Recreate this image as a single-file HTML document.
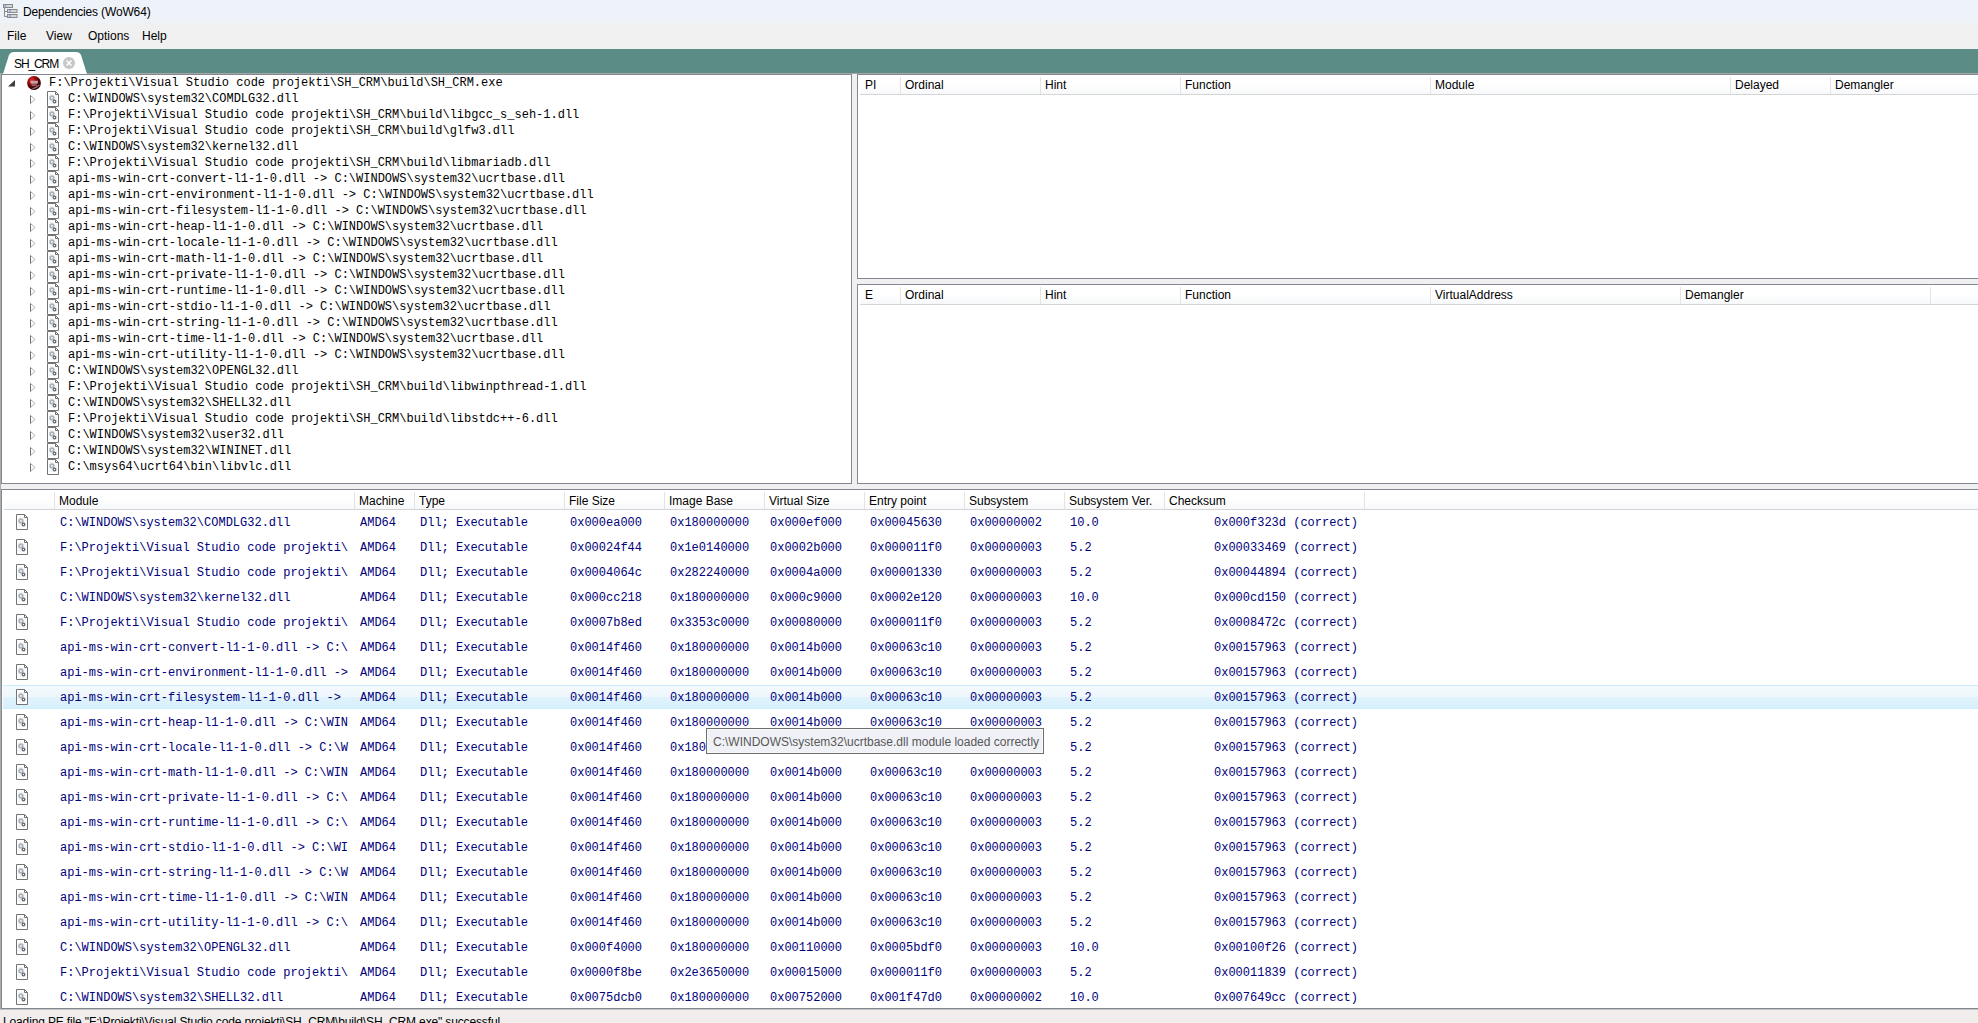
<!DOCTYPE html>
<html><head><meta charset="utf-8"><style>
*{box-sizing:border-box}
html,body{margin:0;padding:0}
body{width:1978px;height:1023px;overflow:hidden;position:relative;background:#f0f0f0;font-family:"Liberation Sans",sans-serif;font-size:12px;color:#000}
.a{position:absolute}
.t{position:absolute;white-space:pre;line-height:14px}
.mono{font-family:"Liberation Mono",monospace;font-size:12px}
#title{left:0;top:0;width:1978px;height:23px;background:#eef2f9}
#menu{left:0;top:23px;width:1978px;height:26px;background:#f0f0f0}
#teal{left:0;top:49px;width:1978px;height:24px;background:#5c8c86}
#tabline{left:0;top:73px;width:1978px;height:1px;background:#a6a6a6}
.panel{position:absolute;background:#fff;border:1px solid #828790;overflow:hidden}
.hdr{position:absolute;left:1px;top:1px;height:19px;background:linear-gradient(#fff 0%,#fff 45%,#f7f8fa 100%);border-bottom:1px solid #d5d5d5}
.sep{position:absolute;top:2px;width:1px;height:17px;background:#e3e4e6}
.fi{position:absolute}
.exp{position:absolute}
.row{position:absolute;left:0;width:1978px;height:25px}
.hl{background:linear-gradient(#f3fafe 0%,#eef7fd 50%,#e0f3fc 51%,#d7effc 100%);border-top:1px solid #cdeefd;border-bottom:1px solid #cdeefd;height:24px}
.d{color:#00007a}
</style></head><body>

<div id="title" class="a"></div>
<svg class="a" style="left:3px;top:4px" width="15" height="15" viewBox="0 0 15 15">
<path d="M1.5 2V12.5H4M1.5 7.5H4" fill="none" stroke="#8c8c8c" stroke-width="1"/>
<rect x="0.5" y="0.5" width="9" height="3" fill="#d7d7d7" stroke="#8a8a8a"/>
<rect x="4.5" y="5.5" width="9.5" height="3" fill="#d7d7d7" stroke="#8a8a8a"/>
<rect x="4.5" y="10.5" width="9.5" height="3" fill="#d7d7d7" stroke="#8a8a8a"/>
<rect x="1.5" y="1.5" width="2" height="1" fill="#3a8cff"/>
<rect x="6" y="6.5" width="2" height="1" fill="#3a8cff"/>
<rect x="6" y="11.5" width="2" height="1" fill="#3a8cff"/>
</svg>
<div class="t" style="left:23px;top:5px;font-size:12px;letter-spacing:-0.15px">Dependencies (WoW64)</div>
<div id="menu" class="a"></div>
<div class="t" style="left:7px;top:29px">File</div>
<div class="t" style="left:46px;top:29px">View</div>
<div class="t" style="left:88px;top:29px">Options</div>
<div class="t" style="left:142px;top:29px">Help</div>
<div id="teal" class="a"></div>
<div id="tabline" class="a"></div>
<div class="a" style="left:0;top:73px;width:1px;height:937px;background:#acacac"></div>
<div class="a" style="left:0;top:1009px;width:1978px;height:1px;background:#c4c4c4"></div>
<div class="a" style="left:0;top:1010px;width:1978px;height:13px;background:#f1eded"></div>
<svg class="a" style="left:0;top:50px" width="92" height="24" viewBox="0 0 92 24"><path d="M3 24 L9 5 Q10.5 2 14 2 L76 2 Q79.5 2 81 5 L87 24 Z" fill="#fff"/></svg>
<div class="t" style="left:14px;top:57px;letter-spacing:-1.1px">SH_CRM</div>
<svg class="a" style="left:63px;top:57px" width="12" height="12" viewBox="0 0 12 12"><circle cx="6" cy="6" r="6" fill="#c7c7c7"/><path d="M3.5 3.5L8.5 8.5M8.5 3.5L3.5 8.5" stroke="#fff" stroke-width="1.5"/></svg>
<div class="panel" style="left:1px;top:74px;width:851px;height:410px">
<svg class="exp" style="left:6px;top:5px" width="8" height="7" viewBox="0 0 8 7"><path d="M7 0V6.5H0Z" fill="#404040"/></svg>
<svg class="a" style="left:25px;top:1px" width="14" height="14" viewBox="0 0 14 14"><defs><radialGradient id="rg" cx="35%" cy="30%" r="75%"><stop offset="0" stop-color="#e03535"/><stop offset="0.35" stop-color="#a00c0c"/><stop offset="0.7" stop-color="#4a0404"/><stop offset="1" stop-color="#300202"/></radialGradient></defs><circle cx="7" cy="7" r="6.9" fill="url(#rg)"/><path d="M3.2 4.8H11.2L10.6 7.8H3.8Z" fill="#c9b8bb" opacity="0.85"/><path d="M4.5 8.6H10L9.6 9.8H4.8Z" fill="#b9a4a8" opacity="0.8"/><path d="M5 12.2Q9 11.6 12.3 8.6L12.6 9.6Q9.5 12.8 6 13Z" fill="#9a9098" opacity="0.9"/></svg>
<div class="t mono" style="left:47px;top:1px">F:\Projekti\Visual Studio code projekti\SH_CRM\build\SH_CRM.exe</div>
<svg class="exp" style="left:28px;top:20px" width="6" height="9" viewBox="0 0 6 9"><path d="M0.5 0.5V8.5L5 4.5Z" fill="#fff" stroke="#b0b0b0"/><path d="M0.5 0.5V8.5" stroke="#707070"/></svg>
<div style="position:absolute;left:45px;top:16px"><svg class="fi" width="12" height="16" viewBox="0 0 12 16"><path d="M0.5 0.5H8.5L11.5 3.5V15.5H0.5Z" fill="#fff" stroke="#737373"/><rect x="2.5" y="3" width="7.5" height="10" fill="#f6f6f6"/><path d="M8.5 0.5V3.5H11.5" fill="none" stroke="#737373"/><circle cx="4.9" cy="6.9" r="2.7" fill="#a9b2bb"/><circle cx="4.9" cy="6.9" r="1" fill="#f2f4f6"/><circle cx="7.5" cy="10.5" r="1.9" fill="#5f676f"/><circle cx="7.5" cy="10.5" r="0.7" fill="#fff"/></svg></div>
<div class="t mono" style="left:66px;top:17px">C:\WINDOWS\system32\COMDLG32.dll</div>
<svg class="exp" style="left:28px;top:36px" width="6" height="9" viewBox="0 0 6 9"><path d="M0.5 0.5V8.5L5 4.5Z" fill="#fff" stroke="#b0b0b0"/><path d="M0.5 0.5V8.5" stroke="#707070"/></svg>
<div style="position:absolute;left:45px;top:32px"><svg class="fi" width="12" height="16" viewBox="0 0 12 16"><path d="M0.5 0.5H8.5L11.5 3.5V15.5H0.5Z" fill="#fff" stroke="#737373"/><rect x="2.5" y="3" width="7.5" height="10" fill="#f6f6f6"/><path d="M8.5 0.5V3.5H11.5" fill="none" stroke="#737373"/><circle cx="4.9" cy="6.9" r="2.7" fill="#a9b2bb"/><circle cx="4.9" cy="6.9" r="1" fill="#f2f4f6"/><circle cx="7.5" cy="10.5" r="1.9" fill="#5f676f"/><circle cx="7.5" cy="10.5" r="0.7" fill="#fff"/></svg></div>
<div class="t mono" style="left:66px;top:33px">F:\Projekti\Visual Studio code projekti\SH_CRM\build\libgcc_s_seh-1.dll</div>
<svg class="exp" style="left:28px;top:52px" width="6" height="9" viewBox="0 0 6 9"><path d="M0.5 0.5V8.5L5 4.5Z" fill="#fff" stroke="#b0b0b0"/><path d="M0.5 0.5V8.5" stroke="#707070"/></svg>
<div style="position:absolute;left:45px;top:48px"><svg class="fi" width="12" height="16" viewBox="0 0 12 16"><path d="M0.5 0.5H8.5L11.5 3.5V15.5H0.5Z" fill="#fff" stroke="#737373"/><rect x="2.5" y="3" width="7.5" height="10" fill="#f6f6f6"/><path d="M8.5 0.5V3.5H11.5" fill="none" stroke="#737373"/><circle cx="4.9" cy="6.9" r="2.7" fill="#a9b2bb"/><circle cx="4.9" cy="6.9" r="1" fill="#f2f4f6"/><circle cx="7.5" cy="10.5" r="1.9" fill="#5f676f"/><circle cx="7.5" cy="10.5" r="0.7" fill="#fff"/></svg></div>
<div class="t mono" style="left:66px;top:49px">F:\Projekti\Visual Studio code projekti\SH_CRM\build\glfw3.dll</div>
<svg class="exp" style="left:28px;top:68px" width="6" height="9" viewBox="0 0 6 9"><path d="M0.5 0.5V8.5L5 4.5Z" fill="#fff" stroke="#b0b0b0"/><path d="M0.5 0.5V8.5" stroke="#707070"/></svg>
<div style="position:absolute;left:45px;top:64px"><svg class="fi" width="12" height="16" viewBox="0 0 12 16"><path d="M0.5 0.5H8.5L11.5 3.5V15.5H0.5Z" fill="#fff" stroke="#737373"/><rect x="2.5" y="3" width="7.5" height="10" fill="#f6f6f6"/><path d="M8.5 0.5V3.5H11.5" fill="none" stroke="#737373"/><circle cx="4.9" cy="6.9" r="2.7" fill="#a9b2bb"/><circle cx="4.9" cy="6.9" r="1" fill="#f2f4f6"/><circle cx="7.5" cy="10.5" r="1.9" fill="#5f676f"/><circle cx="7.5" cy="10.5" r="0.7" fill="#fff"/></svg></div>
<div class="t mono" style="left:66px;top:65px">C:\WINDOWS\system32\kernel32.dll</div>
<svg class="exp" style="left:28px;top:84px" width="6" height="9" viewBox="0 0 6 9"><path d="M0.5 0.5V8.5L5 4.5Z" fill="#fff" stroke="#b0b0b0"/><path d="M0.5 0.5V8.5" stroke="#707070"/></svg>
<div style="position:absolute;left:45px;top:80px"><svg class="fi" width="12" height="16" viewBox="0 0 12 16"><path d="M0.5 0.5H8.5L11.5 3.5V15.5H0.5Z" fill="#fff" stroke="#737373"/><rect x="2.5" y="3" width="7.5" height="10" fill="#f6f6f6"/><path d="M8.5 0.5V3.5H11.5" fill="none" stroke="#737373"/><circle cx="4.9" cy="6.9" r="2.7" fill="#a9b2bb"/><circle cx="4.9" cy="6.9" r="1" fill="#f2f4f6"/><circle cx="7.5" cy="10.5" r="1.9" fill="#5f676f"/><circle cx="7.5" cy="10.5" r="0.7" fill="#fff"/></svg></div>
<div class="t mono" style="left:66px;top:81px">F:\Projekti\Visual Studio code projekti\SH_CRM\build\libmariadb.dll</div>
<svg class="exp" style="left:28px;top:100px" width="6" height="9" viewBox="0 0 6 9"><path d="M0.5 0.5V8.5L5 4.5Z" fill="#fff" stroke="#b0b0b0"/><path d="M0.5 0.5V8.5" stroke="#707070"/></svg>
<div style="position:absolute;left:45px;top:96px"><svg class="fi" width="12" height="16" viewBox="0 0 12 16"><path d="M0.5 0.5H8.5L11.5 3.5V15.5H0.5Z" fill="#fff" stroke="#737373"/><rect x="2.5" y="3" width="7.5" height="10" fill="#f6f6f6"/><path d="M8.5 0.5V3.5H11.5" fill="none" stroke="#737373"/><circle cx="4.9" cy="6.9" r="2.7" fill="#a9b2bb"/><circle cx="4.9" cy="6.9" r="1" fill="#f2f4f6"/><circle cx="7.5" cy="10.5" r="1.9" fill="#5f676f"/><circle cx="7.5" cy="10.5" r="0.7" fill="#fff"/></svg></div>
<div class="t mono" style="left:66px;top:97px">api-ms-win-crt-convert-l1-1-0.dll -&gt; C:\WINDOWS\system32\ucrtbase.dll</div>
<svg class="exp" style="left:28px;top:116px" width="6" height="9" viewBox="0 0 6 9"><path d="M0.5 0.5V8.5L5 4.5Z" fill="#fff" stroke="#b0b0b0"/><path d="M0.5 0.5V8.5" stroke="#707070"/></svg>
<div style="position:absolute;left:45px;top:112px"><svg class="fi" width="12" height="16" viewBox="0 0 12 16"><path d="M0.5 0.5H8.5L11.5 3.5V15.5H0.5Z" fill="#fff" stroke="#737373"/><rect x="2.5" y="3" width="7.5" height="10" fill="#f6f6f6"/><path d="M8.5 0.5V3.5H11.5" fill="none" stroke="#737373"/><circle cx="4.9" cy="6.9" r="2.7" fill="#a9b2bb"/><circle cx="4.9" cy="6.9" r="1" fill="#f2f4f6"/><circle cx="7.5" cy="10.5" r="1.9" fill="#5f676f"/><circle cx="7.5" cy="10.5" r="0.7" fill="#fff"/></svg></div>
<div class="t mono" style="left:66px;top:113px">api-ms-win-crt-environment-l1-1-0.dll -&gt; C:\WINDOWS\system32\ucrtbase.dll</div>
<svg class="exp" style="left:28px;top:132px" width="6" height="9" viewBox="0 0 6 9"><path d="M0.5 0.5V8.5L5 4.5Z" fill="#fff" stroke="#b0b0b0"/><path d="M0.5 0.5V8.5" stroke="#707070"/></svg>
<div style="position:absolute;left:45px;top:128px"><svg class="fi" width="12" height="16" viewBox="0 0 12 16"><path d="M0.5 0.5H8.5L11.5 3.5V15.5H0.5Z" fill="#fff" stroke="#737373"/><rect x="2.5" y="3" width="7.5" height="10" fill="#f6f6f6"/><path d="M8.5 0.5V3.5H11.5" fill="none" stroke="#737373"/><circle cx="4.9" cy="6.9" r="2.7" fill="#a9b2bb"/><circle cx="4.9" cy="6.9" r="1" fill="#f2f4f6"/><circle cx="7.5" cy="10.5" r="1.9" fill="#5f676f"/><circle cx="7.5" cy="10.5" r="0.7" fill="#fff"/></svg></div>
<div class="t mono" style="left:66px;top:129px">api-ms-win-crt-filesystem-l1-1-0.dll -&gt; C:\WINDOWS\system32\ucrtbase.dll</div>
<svg class="exp" style="left:28px;top:148px" width="6" height="9" viewBox="0 0 6 9"><path d="M0.5 0.5V8.5L5 4.5Z" fill="#fff" stroke="#b0b0b0"/><path d="M0.5 0.5V8.5" stroke="#707070"/></svg>
<div style="position:absolute;left:45px;top:144px"><svg class="fi" width="12" height="16" viewBox="0 0 12 16"><path d="M0.5 0.5H8.5L11.5 3.5V15.5H0.5Z" fill="#fff" stroke="#737373"/><rect x="2.5" y="3" width="7.5" height="10" fill="#f6f6f6"/><path d="M8.5 0.5V3.5H11.5" fill="none" stroke="#737373"/><circle cx="4.9" cy="6.9" r="2.7" fill="#a9b2bb"/><circle cx="4.9" cy="6.9" r="1" fill="#f2f4f6"/><circle cx="7.5" cy="10.5" r="1.9" fill="#5f676f"/><circle cx="7.5" cy="10.5" r="0.7" fill="#fff"/></svg></div>
<div class="t mono" style="left:66px;top:145px">api-ms-win-crt-heap-l1-1-0.dll -&gt; C:\WINDOWS\system32\ucrtbase.dll</div>
<svg class="exp" style="left:28px;top:164px" width="6" height="9" viewBox="0 0 6 9"><path d="M0.5 0.5V8.5L5 4.5Z" fill="#fff" stroke="#b0b0b0"/><path d="M0.5 0.5V8.5" stroke="#707070"/></svg>
<div style="position:absolute;left:45px;top:160px"><svg class="fi" width="12" height="16" viewBox="0 0 12 16"><path d="M0.5 0.5H8.5L11.5 3.5V15.5H0.5Z" fill="#fff" stroke="#737373"/><rect x="2.5" y="3" width="7.5" height="10" fill="#f6f6f6"/><path d="M8.5 0.5V3.5H11.5" fill="none" stroke="#737373"/><circle cx="4.9" cy="6.9" r="2.7" fill="#a9b2bb"/><circle cx="4.9" cy="6.9" r="1" fill="#f2f4f6"/><circle cx="7.5" cy="10.5" r="1.9" fill="#5f676f"/><circle cx="7.5" cy="10.5" r="0.7" fill="#fff"/></svg></div>
<div class="t mono" style="left:66px;top:161px">api-ms-win-crt-locale-l1-1-0.dll -&gt; C:\WINDOWS\system32\ucrtbase.dll</div>
<svg class="exp" style="left:28px;top:180px" width="6" height="9" viewBox="0 0 6 9"><path d="M0.5 0.5V8.5L5 4.5Z" fill="#fff" stroke="#b0b0b0"/><path d="M0.5 0.5V8.5" stroke="#707070"/></svg>
<div style="position:absolute;left:45px;top:176px"><svg class="fi" width="12" height="16" viewBox="0 0 12 16"><path d="M0.5 0.5H8.5L11.5 3.5V15.5H0.5Z" fill="#fff" stroke="#737373"/><rect x="2.5" y="3" width="7.5" height="10" fill="#f6f6f6"/><path d="M8.5 0.5V3.5H11.5" fill="none" stroke="#737373"/><circle cx="4.9" cy="6.9" r="2.7" fill="#a9b2bb"/><circle cx="4.9" cy="6.9" r="1" fill="#f2f4f6"/><circle cx="7.5" cy="10.5" r="1.9" fill="#5f676f"/><circle cx="7.5" cy="10.5" r="0.7" fill="#fff"/></svg></div>
<div class="t mono" style="left:66px;top:177px">api-ms-win-crt-math-l1-1-0.dll -&gt; C:\WINDOWS\system32\ucrtbase.dll</div>
<svg class="exp" style="left:28px;top:196px" width="6" height="9" viewBox="0 0 6 9"><path d="M0.5 0.5V8.5L5 4.5Z" fill="#fff" stroke="#b0b0b0"/><path d="M0.5 0.5V8.5" stroke="#707070"/></svg>
<div style="position:absolute;left:45px;top:192px"><svg class="fi" width="12" height="16" viewBox="0 0 12 16"><path d="M0.5 0.5H8.5L11.5 3.5V15.5H0.5Z" fill="#fff" stroke="#737373"/><rect x="2.5" y="3" width="7.5" height="10" fill="#f6f6f6"/><path d="M8.5 0.5V3.5H11.5" fill="none" stroke="#737373"/><circle cx="4.9" cy="6.9" r="2.7" fill="#a9b2bb"/><circle cx="4.9" cy="6.9" r="1" fill="#f2f4f6"/><circle cx="7.5" cy="10.5" r="1.9" fill="#5f676f"/><circle cx="7.5" cy="10.5" r="0.7" fill="#fff"/></svg></div>
<div class="t mono" style="left:66px;top:193px">api-ms-win-crt-private-l1-1-0.dll -&gt; C:\WINDOWS\system32\ucrtbase.dll</div>
<svg class="exp" style="left:28px;top:212px" width="6" height="9" viewBox="0 0 6 9"><path d="M0.5 0.5V8.5L5 4.5Z" fill="#fff" stroke="#b0b0b0"/><path d="M0.5 0.5V8.5" stroke="#707070"/></svg>
<div style="position:absolute;left:45px;top:208px"><svg class="fi" width="12" height="16" viewBox="0 0 12 16"><path d="M0.5 0.5H8.5L11.5 3.5V15.5H0.5Z" fill="#fff" stroke="#737373"/><rect x="2.5" y="3" width="7.5" height="10" fill="#f6f6f6"/><path d="M8.5 0.5V3.5H11.5" fill="none" stroke="#737373"/><circle cx="4.9" cy="6.9" r="2.7" fill="#a9b2bb"/><circle cx="4.9" cy="6.9" r="1" fill="#f2f4f6"/><circle cx="7.5" cy="10.5" r="1.9" fill="#5f676f"/><circle cx="7.5" cy="10.5" r="0.7" fill="#fff"/></svg></div>
<div class="t mono" style="left:66px;top:209px">api-ms-win-crt-runtime-l1-1-0.dll -&gt; C:\WINDOWS\system32\ucrtbase.dll</div>
<svg class="exp" style="left:28px;top:228px" width="6" height="9" viewBox="0 0 6 9"><path d="M0.5 0.5V8.5L5 4.5Z" fill="#fff" stroke="#b0b0b0"/><path d="M0.5 0.5V8.5" stroke="#707070"/></svg>
<div style="position:absolute;left:45px;top:224px"><svg class="fi" width="12" height="16" viewBox="0 0 12 16"><path d="M0.5 0.5H8.5L11.5 3.5V15.5H0.5Z" fill="#fff" stroke="#737373"/><rect x="2.5" y="3" width="7.5" height="10" fill="#f6f6f6"/><path d="M8.5 0.5V3.5H11.5" fill="none" stroke="#737373"/><circle cx="4.9" cy="6.9" r="2.7" fill="#a9b2bb"/><circle cx="4.9" cy="6.9" r="1" fill="#f2f4f6"/><circle cx="7.5" cy="10.5" r="1.9" fill="#5f676f"/><circle cx="7.5" cy="10.5" r="0.7" fill="#fff"/></svg></div>
<div class="t mono" style="left:66px;top:225px">api-ms-win-crt-stdio-l1-1-0.dll -&gt; C:\WINDOWS\system32\ucrtbase.dll</div>
<svg class="exp" style="left:28px;top:244px" width="6" height="9" viewBox="0 0 6 9"><path d="M0.5 0.5V8.5L5 4.5Z" fill="#fff" stroke="#b0b0b0"/><path d="M0.5 0.5V8.5" stroke="#707070"/></svg>
<div style="position:absolute;left:45px;top:240px"><svg class="fi" width="12" height="16" viewBox="0 0 12 16"><path d="M0.5 0.5H8.5L11.5 3.5V15.5H0.5Z" fill="#fff" stroke="#737373"/><rect x="2.5" y="3" width="7.5" height="10" fill="#f6f6f6"/><path d="M8.5 0.5V3.5H11.5" fill="none" stroke="#737373"/><circle cx="4.9" cy="6.9" r="2.7" fill="#a9b2bb"/><circle cx="4.9" cy="6.9" r="1" fill="#f2f4f6"/><circle cx="7.5" cy="10.5" r="1.9" fill="#5f676f"/><circle cx="7.5" cy="10.5" r="0.7" fill="#fff"/></svg></div>
<div class="t mono" style="left:66px;top:241px">api-ms-win-crt-string-l1-1-0.dll -&gt; C:\WINDOWS\system32\ucrtbase.dll</div>
<svg class="exp" style="left:28px;top:260px" width="6" height="9" viewBox="0 0 6 9"><path d="M0.5 0.5V8.5L5 4.5Z" fill="#fff" stroke="#b0b0b0"/><path d="M0.5 0.5V8.5" stroke="#707070"/></svg>
<div style="position:absolute;left:45px;top:256px"><svg class="fi" width="12" height="16" viewBox="0 0 12 16"><path d="M0.5 0.5H8.5L11.5 3.5V15.5H0.5Z" fill="#fff" stroke="#737373"/><rect x="2.5" y="3" width="7.5" height="10" fill="#f6f6f6"/><path d="M8.5 0.5V3.5H11.5" fill="none" stroke="#737373"/><circle cx="4.9" cy="6.9" r="2.7" fill="#a9b2bb"/><circle cx="4.9" cy="6.9" r="1" fill="#f2f4f6"/><circle cx="7.5" cy="10.5" r="1.9" fill="#5f676f"/><circle cx="7.5" cy="10.5" r="0.7" fill="#fff"/></svg></div>
<div class="t mono" style="left:66px;top:257px">api-ms-win-crt-time-l1-1-0.dll -&gt; C:\WINDOWS\system32\ucrtbase.dll</div>
<svg class="exp" style="left:28px;top:276px" width="6" height="9" viewBox="0 0 6 9"><path d="M0.5 0.5V8.5L5 4.5Z" fill="#fff" stroke="#b0b0b0"/><path d="M0.5 0.5V8.5" stroke="#707070"/></svg>
<div style="position:absolute;left:45px;top:272px"><svg class="fi" width="12" height="16" viewBox="0 0 12 16"><path d="M0.5 0.5H8.5L11.5 3.5V15.5H0.5Z" fill="#fff" stroke="#737373"/><rect x="2.5" y="3" width="7.5" height="10" fill="#f6f6f6"/><path d="M8.5 0.5V3.5H11.5" fill="none" stroke="#737373"/><circle cx="4.9" cy="6.9" r="2.7" fill="#a9b2bb"/><circle cx="4.9" cy="6.9" r="1" fill="#f2f4f6"/><circle cx="7.5" cy="10.5" r="1.9" fill="#5f676f"/><circle cx="7.5" cy="10.5" r="0.7" fill="#fff"/></svg></div>
<div class="t mono" style="left:66px;top:273px">api-ms-win-crt-utility-l1-1-0.dll -&gt; C:\WINDOWS\system32\ucrtbase.dll</div>
<svg class="exp" style="left:28px;top:292px" width="6" height="9" viewBox="0 0 6 9"><path d="M0.5 0.5V8.5L5 4.5Z" fill="#fff" stroke="#b0b0b0"/><path d="M0.5 0.5V8.5" stroke="#707070"/></svg>
<div style="position:absolute;left:45px;top:288px"><svg class="fi" width="12" height="16" viewBox="0 0 12 16"><path d="M0.5 0.5H8.5L11.5 3.5V15.5H0.5Z" fill="#fff" stroke="#737373"/><rect x="2.5" y="3" width="7.5" height="10" fill="#f6f6f6"/><path d="M8.5 0.5V3.5H11.5" fill="none" stroke="#737373"/><circle cx="4.9" cy="6.9" r="2.7" fill="#a9b2bb"/><circle cx="4.9" cy="6.9" r="1" fill="#f2f4f6"/><circle cx="7.5" cy="10.5" r="1.9" fill="#5f676f"/><circle cx="7.5" cy="10.5" r="0.7" fill="#fff"/></svg></div>
<div class="t mono" style="left:66px;top:289px">C:\WINDOWS\system32\OPENGL32.dll</div>
<svg class="exp" style="left:28px;top:308px" width="6" height="9" viewBox="0 0 6 9"><path d="M0.5 0.5V8.5L5 4.5Z" fill="#fff" stroke="#b0b0b0"/><path d="M0.5 0.5V8.5" stroke="#707070"/></svg>
<div style="position:absolute;left:45px;top:304px"><svg class="fi" width="12" height="16" viewBox="0 0 12 16"><path d="M0.5 0.5H8.5L11.5 3.5V15.5H0.5Z" fill="#fff" stroke="#737373"/><rect x="2.5" y="3" width="7.5" height="10" fill="#f6f6f6"/><path d="M8.5 0.5V3.5H11.5" fill="none" stroke="#737373"/><circle cx="4.9" cy="6.9" r="2.7" fill="#a9b2bb"/><circle cx="4.9" cy="6.9" r="1" fill="#f2f4f6"/><circle cx="7.5" cy="10.5" r="1.9" fill="#5f676f"/><circle cx="7.5" cy="10.5" r="0.7" fill="#fff"/></svg></div>
<div class="t mono" style="left:66px;top:305px">F:\Projekti\Visual Studio code projekti\SH_CRM\build\libwinpthread-1.dll</div>
<svg class="exp" style="left:28px;top:324px" width="6" height="9" viewBox="0 0 6 9"><path d="M0.5 0.5V8.5L5 4.5Z" fill="#fff" stroke="#b0b0b0"/><path d="M0.5 0.5V8.5" stroke="#707070"/></svg>
<div style="position:absolute;left:45px;top:320px"><svg class="fi" width="12" height="16" viewBox="0 0 12 16"><path d="M0.5 0.5H8.5L11.5 3.5V15.5H0.5Z" fill="#fff" stroke="#737373"/><rect x="2.5" y="3" width="7.5" height="10" fill="#f6f6f6"/><path d="M8.5 0.5V3.5H11.5" fill="none" stroke="#737373"/><circle cx="4.9" cy="6.9" r="2.7" fill="#a9b2bb"/><circle cx="4.9" cy="6.9" r="1" fill="#f2f4f6"/><circle cx="7.5" cy="10.5" r="1.9" fill="#5f676f"/><circle cx="7.5" cy="10.5" r="0.7" fill="#fff"/></svg></div>
<div class="t mono" style="left:66px;top:321px">C:\WINDOWS\system32\SHELL32.dll</div>
<svg class="exp" style="left:28px;top:340px" width="6" height="9" viewBox="0 0 6 9"><path d="M0.5 0.5V8.5L5 4.5Z" fill="#fff" stroke="#b0b0b0"/><path d="M0.5 0.5V8.5" stroke="#707070"/></svg>
<div style="position:absolute;left:45px;top:336px"><svg class="fi" width="12" height="16" viewBox="0 0 12 16"><path d="M0.5 0.5H8.5L11.5 3.5V15.5H0.5Z" fill="#fff" stroke="#737373"/><rect x="2.5" y="3" width="7.5" height="10" fill="#f6f6f6"/><path d="M8.5 0.5V3.5H11.5" fill="none" stroke="#737373"/><circle cx="4.9" cy="6.9" r="2.7" fill="#a9b2bb"/><circle cx="4.9" cy="6.9" r="1" fill="#f2f4f6"/><circle cx="7.5" cy="10.5" r="1.9" fill="#5f676f"/><circle cx="7.5" cy="10.5" r="0.7" fill="#fff"/></svg></div>
<div class="t mono" style="left:66px;top:337px">F:\Projekti\Visual Studio code projekti\SH_CRM\build\libstdc++-6.dll</div>
<svg class="exp" style="left:28px;top:356px" width="6" height="9" viewBox="0 0 6 9"><path d="M0.5 0.5V8.5L5 4.5Z" fill="#fff" stroke="#b0b0b0"/><path d="M0.5 0.5V8.5" stroke="#707070"/></svg>
<div style="position:absolute;left:45px;top:352px"><svg class="fi" width="12" height="16" viewBox="0 0 12 16"><path d="M0.5 0.5H8.5L11.5 3.5V15.5H0.5Z" fill="#fff" stroke="#737373"/><rect x="2.5" y="3" width="7.5" height="10" fill="#f6f6f6"/><path d="M8.5 0.5V3.5H11.5" fill="none" stroke="#737373"/><circle cx="4.9" cy="6.9" r="2.7" fill="#a9b2bb"/><circle cx="4.9" cy="6.9" r="1" fill="#f2f4f6"/><circle cx="7.5" cy="10.5" r="1.9" fill="#5f676f"/><circle cx="7.5" cy="10.5" r="0.7" fill="#fff"/></svg></div>
<div class="t mono" style="left:66px;top:353px">C:\WINDOWS\system32\user32.dll</div>
<svg class="exp" style="left:28px;top:372px" width="6" height="9" viewBox="0 0 6 9"><path d="M0.5 0.5V8.5L5 4.5Z" fill="#fff" stroke="#b0b0b0"/><path d="M0.5 0.5V8.5" stroke="#707070"/></svg>
<div style="position:absolute;left:45px;top:368px"><svg class="fi" width="12" height="16" viewBox="0 0 12 16"><path d="M0.5 0.5H8.5L11.5 3.5V15.5H0.5Z" fill="#fff" stroke="#737373"/><rect x="2.5" y="3" width="7.5" height="10" fill="#f6f6f6"/><path d="M8.5 0.5V3.5H11.5" fill="none" stroke="#737373"/><circle cx="4.9" cy="6.9" r="2.7" fill="#a9b2bb"/><circle cx="4.9" cy="6.9" r="1" fill="#f2f4f6"/><circle cx="7.5" cy="10.5" r="1.9" fill="#5f676f"/><circle cx="7.5" cy="10.5" r="0.7" fill="#fff"/></svg></div>
<div class="t mono" style="left:66px;top:369px">C:\WINDOWS\system32\WININET.dll</div>
<svg class="exp" style="left:28px;top:388px" width="6" height="9" viewBox="0 0 6 9"><path d="M0.5 0.5V8.5L5 4.5Z" fill="#fff" stroke="#b0b0b0"/><path d="M0.5 0.5V8.5" stroke="#707070"/></svg>
<div style="position:absolute;left:45px;top:384px"><svg class="fi" width="12" height="16" viewBox="0 0 12 16"><path d="M0.5 0.5H8.5L11.5 3.5V15.5H0.5Z" fill="#fff" stroke="#737373"/><rect x="2.5" y="3" width="7.5" height="10" fill="#f6f6f6"/><path d="M8.5 0.5V3.5H11.5" fill="none" stroke="#737373"/><circle cx="4.9" cy="6.9" r="2.7" fill="#a9b2bb"/><circle cx="4.9" cy="6.9" r="1" fill="#f2f4f6"/><circle cx="7.5" cy="10.5" r="1.9" fill="#5f676f"/><circle cx="7.5" cy="10.5" r="0.7" fill="#fff"/></svg></div>
<div class="t mono" style="left:66px;top:385px">C:\msys64\ucrt64\bin\libvlc.dll</div>
</div>
<div class="panel" style="left:857px;top:74px;width:1122px;height:205px;border-right:none"><div class="hdr" style="left:2px;width:1121px"></div><div class="sep" style="left:42px"></div><div class="sep" style="left:182px"></div><div class="sep" style="left:322px"></div><div class="sep" style="left:572px"></div><div class="sep" style="left:872px"></div><div class="sep" style="left:972px"></div><div class="t" style="left:7px;top:3px">PI</div><div class="t" style="left:47px;top:3px">Ordinal</div><div class="t" style="left:187px;top:3px">Hint</div><div class="t" style="left:327px;top:3px">Function</div><div class="t" style="left:577px;top:3px">Module</div><div class="t" style="left:877px;top:3px">Delayed</div><div class="t" style="left:977px;top:3px">Demangler</div></div>
<div class="panel" style="left:857px;top:284px;width:1122px;height:200px;border-right:none"><div class="hdr" style="left:2px;width:1121px"></div><div class="sep" style="left:42px"></div><div class="sep" style="left:182px"></div><div class="sep" style="left:322px"></div><div class="sep" style="left:572px"></div><div class="sep" style="left:822px"></div><div class="sep" style="left:1072px"></div><div class="t" style="left:7px;top:3px">E</div><div class="t" style="left:47px;top:3px">Ordinal</div><div class="t" style="left:187px;top:3px">Hint</div><div class="t" style="left:327px;top:3px">Function</div><div class="t" style="left:577px;top:3px">VirtualAddress</div><div class="t" style="left:827px;top:3px">Demangler</div></div>
<div class="panel" style="left:1px;top:489px;width:1978px;height:520px;border-right:none">
<div class="hdr" style="left:2px;width:1978px"></div>
<div class="sep" style="left:52px"></div>
<div class="sep" style="left:352px"></div>
<div class="sep" style="left:412px"></div>
<div class="sep" style="left:562px"></div>
<div class="sep" style="left:662px"></div>
<div class="sep" style="left:762px"></div>
<div class="sep" style="left:862px"></div>
<div class="sep" style="left:962px"></div>
<div class="sep" style="left:1062px"></div>
<div class="sep" style="left:1162px"></div>
<div class="sep" style="left:1362px"></div>
<div class="t" style="left:57px;top:4px">Module</div>
<div class="t" style="left:357px;top:4px">Machine</div>
<div class="t" style="left:417px;top:4px">Type</div>
<div class="t" style="left:567px;top:4px">File Size</div>
<div class="t" style="left:667px;top:4px">Image Base</div>
<div class="t" style="left:767px;top:4px">Virtual Size</div>
<div class="t" style="left:867px;top:4px">Entry point</div>
<div class="t" style="left:967px;top:4px">Subsystem</div>
<div class="t" style="left:1067px;top:4px">Subsystem Ver.</div>
<div class="t" style="left:1167px;top:4px">Checksum</div>
<div class="row" style="left:0px;top:20px"></div>
<div style="position:absolute;left:14px;top:24px"><svg class="fi" width="12" height="16" viewBox="0 0 12 16"><path d="M0.5 0.5H8.5L11.5 3.5V15.5H0.5Z" fill="#fff" stroke="#737373"/><rect x="2.5" y="3" width="7.5" height="10" fill="#f6f6f6"/><path d="M8.5 0.5V3.5H11.5" fill="none" stroke="#737373"/><circle cx="4.9" cy="6.9" r="2.7" fill="#a9b2bb"/><circle cx="4.9" cy="6.9" r="1" fill="#f2f4f6"/><circle cx="7.5" cy="10.5" r="1.9" fill="#5f676f"/><circle cx="7.5" cy="10.5" r="0.7" fill="#fff"/></svg></div>
<div class="t mono d" style="left:58px;top:26px">C:\WINDOWS\system32\COMDLG32.dll</div>
<div class="t mono d" style="left:358px;top:26px">AMD64</div>
<div class="t mono d" style="left:418px;top:26px">Dll; Executable</div>
<div class="t mono d" style="left:568px;top:26px">0x000ea000</div>
<div class="t mono d" style="left:668px;top:26px">0x180000000</div>
<div class="t mono d" style="left:768px;top:26px">0x000ef000</div>
<div class="t mono d" style="left:868px;top:26px">0x00045630</div>
<div class="t mono d" style="left:968px;top:26px">0x00000002</div>
<div class="t mono d" style="left:1068px;top:26px">10.0</div>
<div class="t mono d" style="left:1212px;top:26px">0x000f323d (correct)</div>
<div class="row" style="left:0px;top:45px"></div>
<div style="position:absolute;left:14px;top:49px"><svg class="fi" width="12" height="16" viewBox="0 0 12 16"><path d="M0.5 0.5H8.5L11.5 3.5V15.5H0.5Z" fill="#fff" stroke="#737373"/><rect x="2.5" y="3" width="7.5" height="10" fill="#f6f6f6"/><path d="M8.5 0.5V3.5H11.5" fill="none" stroke="#737373"/><circle cx="4.9" cy="6.9" r="2.7" fill="#a9b2bb"/><circle cx="4.9" cy="6.9" r="1" fill="#f2f4f6"/><circle cx="7.5" cy="10.5" r="1.9" fill="#5f676f"/><circle cx="7.5" cy="10.5" r="0.7" fill="#fff"/></svg></div>
<div class="t mono d" style="left:58px;top:51px">F:\Projekti\Visual Studio code projekti\</div>
<div class="t mono d" style="left:358px;top:51px">AMD64</div>
<div class="t mono d" style="left:418px;top:51px">Dll; Executable</div>
<div class="t mono d" style="left:568px;top:51px">0x00024f44</div>
<div class="t mono d" style="left:668px;top:51px">0x1e0140000</div>
<div class="t mono d" style="left:768px;top:51px">0x0002b000</div>
<div class="t mono d" style="left:868px;top:51px">0x000011f0</div>
<div class="t mono d" style="left:968px;top:51px">0x00000003</div>
<div class="t mono d" style="left:1068px;top:51px">5.2</div>
<div class="t mono d" style="left:1212px;top:51px">0x00033469 (correct)</div>
<div class="row" style="left:0px;top:70px"></div>
<div style="position:absolute;left:14px;top:74px"><svg class="fi" width="12" height="16" viewBox="0 0 12 16"><path d="M0.5 0.5H8.5L11.5 3.5V15.5H0.5Z" fill="#fff" stroke="#737373"/><rect x="2.5" y="3" width="7.5" height="10" fill="#f6f6f6"/><path d="M8.5 0.5V3.5H11.5" fill="none" stroke="#737373"/><circle cx="4.9" cy="6.9" r="2.7" fill="#a9b2bb"/><circle cx="4.9" cy="6.9" r="1" fill="#f2f4f6"/><circle cx="7.5" cy="10.5" r="1.9" fill="#5f676f"/><circle cx="7.5" cy="10.5" r="0.7" fill="#fff"/></svg></div>
<div class="t mono d" style="left:58px;top:76px">F:\Projekti\Visual Studio code projekti\</div>
<div class="t mono d" style="left:358px;top:76px">AMD64</div>
<div class="t mono d" style="left:418px;top:76px">Dll; Executable</div>
<div class="t mono d" style="left:568px;top:76px">0x0004064c</div>
<div class="t mono d" style="left:668px;top:76px">0x282240000</div>
<div class="t mono d" style="left:768px;top:76px">0x0004a000</div>
<div class="t mono d" style="left:868px;top:76px">0x00001330</div>
<div class="t mono d" style="left:968px;top:76px">0x00000003</div>
<div class="t mono d" style="left:1068px;top:76px">5.2</div>
<div class="t mono d" style="left:1212px;top:76px">0x00044894 (correct)</div>
<div class="row" style="left:0px;top:95px"></div>
<div style="position:absolute;left:14px;top:99px"><svg class="fi" width="12" height="16" viewBox="0 0 12 16"><path d="M0.5 0.5H8.5L11.5 3.5V15.5H0.5Z" fill="#fff" stroke="#737373"/><rect x="2.5" y="3" width="7.5" height="10" fill="#f6f6f6"/><path d="M8.5 0.5V3.5H11.5" fill="none" stroke="#737373"/><circle cx="4.9" cy="6.9" r="2.7" fill="#a9b2bb"/><circle cx="4.9" cy="6.9" r="1" fill="#f2f4f6"/><circle cx="7.5" cy="10.5" r="1.9" fill="#5f676f"/><circle cx="7.5" cy="10.5" r="0.7" fill="#fff"/></svg></div>
<div class="t mono d" style="left:58px;top:101px">C:\WINDOWS\system32\kernel32.dll</div>
<div class="t mono d" style="left:358px;top:101px">AMD64</div>
<div class="t mono d" style="left:418px;top:101px">Dll; Executable</div>
<div class="t mono d" style="left:568px;top:101px">0x000cc218</div>
<div class="t mono d" style="left:668px;top:101px">0x180000000</div>
<div class="t mono d" style="left:768px;top:101px">0x000c9000</div>
<div class="t mono d" style="left:868px;top:101px">0x0002e120</div>
<div class="t mono d" style="left:968px;top:101px">0x00000003</div>
<div class="t mono d" style="left:1068px;top:101px">10.0</div>
<div class="t mono d" style="left:1212px;top:101px">0x000cd150 (correct)</div>
<div class="row" style="left:0px;top:120px"></div>
<div style="position:absolute;left:14px;top:124px"><svg class="fi" width="12" height="16" viewBox="0 0 12 16"><path d="M0.5 0.5H8.5L11.5 3.5V15.5H0.5Z" fill="#fff" stroke="#737373"/><rect x="2.5" y="3" width="7.5" height="10" fill="#f6f6f6"/><path d="M8.5 0.5V3.5H11.5" fill="none" stroke="#737373"/><circle cx="4.9" cy="6.9" r="2.7" fill="#a9b2bb"/><circle cx="4.9" cy="6.9" r="1" fill="#f2f4f6"/><circle cx="7.5" cy="10.5" r="1.9" fill="#5f676f"/><circle cx="7.5" cy="10.5" r="0.7" fill="#fff"/></svg></div>
<div class="t mono d" style="left:58px;top:126px">F:\Projekti\Visual Studio code projekti\</div>
<div class="t mono d" style="left:358px;top:126px">AMD64</div>
<div class="t mono d" style="left:418px;top:126px">Dll; Executable</div>
<div class="t mono d" style="left:568px;top:126px">0x0007b8ed</div>
<div class="t mono d" style="left:668px;top:126px">0x3353c0000</div>
<div class="t mono d" style="left:768px;top:126px">0x00080000</div>
<div class="t mono d" style="left:868px;top:126px">0x000011f0</div>
<div class="t mono d" style="left:968px;top:126px">0x00000003</div>
<div class="t mono d" style="left:1068px;top:126px">5.2</div>
<div class="t mono d" style="left:1212px;top:126px">0x0008472c (correct)</div>
<div class="row" style="left:0px;top:145px"></div>
<div style="position:absolute;left:14px;top:149px"><svg class="fi" width="12" height="16" viewBox="0 0 12 16"><path d="M0.5 0.5H8.5L11.5 3.5V15.5H0.5Z" fill="#fff" stroke="#737373"/><rect x="2.5" y="3" width="7.5" height="10" fill="#f6f6f6"/><path d="M8.5 0.5V3.5H11.5" fill="none" stroke="#737373"/><circle cx="4.9" cy="6.9" r="2.7" fill="#a9b2bb"/><circle cx="4.9" cy="6.9" r="1" fill="#f2f4f6"/><circle cx="7.5" cy="10.5" r="1.9" fill="#5f676f"/><circle cx="7.5" cy="10.5" r="0.7" fill="#fff"/></svg></div>
<div class="t mono d" style="left:58px;top:151px">api-ms-win-crt-convert-l1-1-0.dll -&gt; C:\</div>
<div class="t mono d" style="left:358px;top:151px">AMD64</div>
<div class="t mono d" style="left:418px;top:151px">Dll; Executable</div>
<div class="t mono d" style="left:568px;top:151px">0x0014f460</div>
<div class="t mono d" style="left:668px;top:151px">0x180000000</div>
<div class="t mono d" style="left:768px;top:151px">0x0014b000</div>
<div class="t mono d" style="left:868px;top:151px">0x00063c10</div>
<div class="t mono d" style="left:968px;top:151px">0x00000003</div>
<div class="t mono d" style="left:1068px;top:151px">5.2</div>
<div class="t mono d" style="left:1212px;top:151px">0x00157963 (correct)</div>
<div class="row" style="left:0px;top:170px"></div>
<div style="position:absolute;left:14px;top:174px"><svg class="fi" width="12" height="16" viewBox="0 0 12 16"><path d="M0.5 0.5H8.5L11.5 3.5V15.5H0.5Z" fill="#fff" stroke="#737373"/><rect x="2.5" y="3" width="7.5" height="10" fill="#f6f6f6"/><path d="M8.5 0.5V3.5H11.5" fill="none" stroke="#737373"/><circle cx="4.9" cy="6.9" r="2.7" fill="#a9b2bb"/><circle cx="4.9" cy="6.9" r="1" fill="#f2f4f6"/><circle cx="7.5" cy="10.5" r="1.9" fill="#5f676f"/><circle cx="7.5" cy="10.5" r="0.7" fill="#fff"/></svg></div>
<div class="t mono d" style="left:58px;top:176px">api-ms-win-crt-environment-l1-1-0.dll -&gt;</div>
<div class="t mono d" style="left:358px;top:176px">AMD64</div>
<div class="t mono d" style="left:418px;top:176px">Dll; Executable</div>
<div class="t mono d" style="left:568px;top:176px">0x0014f460</div>
<div class="t mono d" style="left:668px;top:176px">0x180000000</div>
<div class="t mono d" style="left:768px;top:176px">0x0014b000</div>
<div class="t mono d" style="left:868px;top:176px">0x00063c10</div>
<div class="t mono d" style="left:968px;top:176px">0x00000003</div>
<div class="t mono d" style="left:1068px;top:176px">5.2</div>
<div class="t mono d" style="left:1212px;top:176px">0x00157963 (correct)</div>
<div class="row hl" style="left:1px;top:195px"></div>
<div style="position:absolute;left:14px;top:199px"><svg class="fi" width="12" height="16" viewBox="0 0 12 16"><path d="M0.5 0.5H8.5L11.5 3.5V15.5H0.5Z" fill="#fff" stroke="#737373"/><rect x="2.5" y="3" width="7.5" height="10" fill="#f6f6f6"/><path d="M8.5 0.5V3.5H11.5" fill="none" stroke="#737373"/><circle cx="4.9" cy="6.9" r="2.7" fill="#a9b2bb"/><circle cx="4.9" cy="6.9" r="1" fill="#f2f4f6"/><circle cx="7.5" cy="10.5" r="1.9" fill="#5f676f"/><circle cx="7.5" cy="10.5" r="0.7" fill="#fff"/></svg></div>
<div class="t mono d" style="left:58px;top:201px">api-ms-win-crt-filesystem-l1-1-0.dll -&gt;</div>
<div class="t mono d" style="left:358px;top:201px">AMD64</div>
<div class="t mono d" style="left:418px;top:201px">Dll; Executable</div>
<div class="t mono d" style="left:568px;top:201px">0x0014f460</div>
<div class="t mono d" style="left:668px;top:201px">0x180000000</div>
<div class="t mono d" style="left:768px;top:201px">0x0014b000</div>
<div class="t mono d" style="left:868px;top:201px">0x00063c10</div>
<div class="t mono d" style="left:968px;top:201px">0x00000003</div>
<div class="t mono d" style="left:1068px;top:201px">5.2</div>
<div class="t mono d" style="left:1212px;top:201px">0x00157963 (correct)</div>
<div class="row" style="left:0px;top:220px"></div>
<div style="position:absolute;left:14px;top:224px"><svg class="fi" width="12" height="16" viewBox="0 0 12 16"><path d="M0.5 0.5H8.5L11.5 3.5V15.5H0.5Z" fill="#fff" stroke="#737373"/><rect x="2.5" y="3" width="7.5" height="10" fill="#f6f6f6"/><path d="M8.5 0.5V3.5H11.5" fill="none" stroke="#737373"/><circle cx="4.9" cy="6.9" r="2.7" fill="#a9b2bb"/><circle cx="4.9" cy="6.9" r="1" fill="#f2f4f6"/><circle cx="7.5" cy="10.5" r="1.9" fill="#5f676f"/><circle cx="7.5" cy="10.5" r="0.7" fill="#fff"/></svg></div>
<div class="t mono d" style="left:58px;top:226px">api-ms-win-crt-heap-l1-1-0.dll -&gt; C:\WIN</div>
<div class="t mono d" style="left:358px;top:226px">AMD64</div>
<div class="t mono d" style="left:418px;top:226px">Dll; Executable</div>
<div class="t mono d" style="left:568px;top:226px">0x0014f460</div>
<div class="t mono d" style="left:668px;top:226px">0x180000000</div>
<div class="t mono d" style="left:768px;top:226px">0x0014b000</div>
<div class="t mono d" style="left:868px;top:226px">0x00063c10</div>
<div class="t mono d" style="left:968px;top:226px">0x00000003</div>
<div class="t mono d" style="left:1068px;top:226px">5.2</div>
<div class="t mono d" style="left:1212px;top:226px">0x00157963 (correct)</div>
<div class="row" style="left:0px;top:245px"></div>
<div style="position:absolute;left:14px;top:249px"><svg class="fi" width="12" height="16" viewBox="0 0 12 16"><path d="M0.5 0.5H8.5L11.5 3.5V15.5H0.5Z" fill="#fff" stroke="#737373"/><rect x="2.5" y="3" width="7.5" height="10" fill="#f6f6f6"/><path d="M8.5 0.5V3.5H11.5" fill="none" stroke="#737373"/><circle cx="4.9" cy="6.9" r="2.7" fill="#a9b2bb"/><circle cx="4.9" cy="6.9" r="1" fill="#f2f4f6"/><circle cx="7.5" cy="10.5" r="1.9" fill="#5f676f"/><circle cx="7.5" cy="10.5" r="0.7" fill="#fff"/></svg></div>
<div class="t mono d" style="left:58px;top:251px">api-ms-win-crt-locale-l1-1-0.dll -&gt; C:\W</div>
<div class="t mono d" style="left:358px;top:251px">AMD64</div>
<div class="t mono d" style="left:418px;top:251px">Dll; Executable</div>
<div class="t mono d" style="left:568px;top:251px">0x0014f460</div>
<div class="t mono d" style="left:668px;top:251px">0x180000000</div>
<div class="t mono d" style="left:768px;top:251px">0x0014b000</div>
<div class="t mono d" style="left:868px;top:251px">0x00063c10</div>
<div class="t mono d" style="left:968px;top:251px">0x00000003</div>
<div class="t mono d" style="left:1068px;top:251px">5.2</div>
<div class="t mono d" style="left:1212px;top:251px">0x00157963 (correct)</div>
<div class="row" style="left:0px;top:270px"></div>
<div style="position:absolute;left:14px;top:274px"><svg class="fi" width="12" height="16" viewBox="0 0 12 16"><path d="M0.5 0.5H8.5L11.5 3.5V15.5H0.5Z" fill="#fff" stroke="#737373"/><rect x="2.5" y="3" width="7.5" height="10" fill="#f6f6f6"/><path d="M8.5 0.5V3.5H11.5" fill="none" stroke="#737373"/><circle cx="4.9" cy="6.9" r="2.7" fill="#a9b2bb"/><circle cx="4.9" cy="6.9" r="1" fill="#f2f4f6"/><circle cx="7.5" cy="10.5" r="1.9" fill="#5f676f"/><circle cx="7.5" cy="10.5" r="0.7" fill="#fff"/></svg></div>
<div class="t mono d" style="left:58px;top:276px">api-ms-win-crt-math-l1-1-0.dll -&gt; C:\WIN</div>
<div class="t mono d" style="left:358px;top:276px">AMD64</div>
<div class="t mono d" style="left:418px;top:276px">Dll; Executable</div>
<div class="t mono d" style="left:568px;top:276px">0x0014f460</div>
<div class="t mono d" style="left:668px;top:276px">0x180000000</div>
<div class="t mono d" style="left:768px;top:276px">0x0014b000</div>
<div class="t mono d" style="left:868px;top:276px">0x00063c10</div>
<div class="t mono d" style="left:968px;top:276px">0x00000003</div>
<div class="t mono d" style="left:1068px;top:276px">5.2</div>
<div class="t mono d" style="left:1212px;top:276px">0x00157963 (correct)</div>
<div class="row" style="left:0px;top:295px"></div>
<div style="position:absolute;left:14px;top:299px"><svg class="fi" width="12" height="16" viewBox="0 0 12 16"><path d="M0.5 0.5H8.5L11.5 3.5V15.5H0.5Z" fill="#fff" stroke="#737373"/><rect x="2.5" y="3" width="7.5" height="10" fill="#f6f6f6"/><path d="M8.5 0.5V3.5H11.5" fill="none" stroke="#737373"/><circle cx="4.9" cy="6.9" r="2.7" fill="#a9b2bb"/><circle cx="4.9" cy="6.9" r="1" fill="#f2f4f6"/><circle cx="7.5" cy="10.5" r="1.9" fill="#5f676f"/><circle cx="7.5" cy="10.5" r="0.7" fill="#fff"/></svg></div>
<div class="t mono d" style="left:58px;top:301px">api-ms-win-crt-private-l1-1-0.dll -&gt; C:\</div>
<div class="t mono d" style="left:358px;top:301px">AMD64</div>
<div class="t mono d" style="left:418px;top:301px">Dll; Executable</div>
<div class="t mono d" style="left:568px;top:301px">0x0014f460</div>
<div class="t mono d" style="left:668px;top:301px">0x180000000</div>
<div class="t mono d" style="left:768px;top:301px">0x0014b000</div>
<div class="t mono d" style="left:868px;top:301px">0x00063c10</div>
<div class="t mono d" style="left:968px;top:301px">0x00000003</div>
<div class="t mono d" style="left:1068px;top:301px">5.2</div>
<div class="t mono d" style="left:1212px;top:301px">0x00157963 (correct)</div>
<div class="row" style="left:0px;top:320px"></div>
<div style="position:absolute;left:14px;top:324px"><svg class="fi" width="12" height="16" viewBox="0 0 12 16"><path d="M0.5 0.5H8.5L11.5 3.5V15.5H0.5Z" fill="#fff" stroke="#737373"/><rect x="2.5" y="3" width="7.5" height="10" fill="#f6f6f6"/><path d="M8.5 0.5V3.5H11.5" fill="none" stroke="#737373"/><circle cx="4.9" cy="6.9" r="2.7" fill="#a9b2bb"/><circle cx="4.9" cy="6.9" r="1" fill="#f2f4f6"/><circle cx="7.5" cy="10.5" r="1.9" fill="#5f676f"/><circle cx="7.5" cy="10.5" r="0.7" fill="#fff"/></svg></div>
<div class="t mono d" style="left:58px;top:326px">api-ms-win-crt-runtime-l1-1-0.dll -&gt; C:\</div>
<div class="t mono d" style="left:358px;top:326px">AMD64</div>
<div class="t mono d" style="left:418px;top:326px">Dll; Executable</div>
<div class="t mono d" style="left:568px;top:326px">0x0014f460</div>
<div class="t mono d" style="left:668px;top:326px">0x180000000</div>
<div class="t mono d" style="left:768px;top:326px">0x0014b000</div>
<div class="t mono d" style="left:868px;top:326px">0x00063c10</div>
<div class="t mono d" style="left:968px;top:326px">0x00000003</div>
<div class="t mono d" style="left:1068px;top:326px">5.2</div>
<div class="t mono d" style="left:1212px;top:326px">0x00157963 (correct)</div>
<div class="row" style="left:0px;top:345px"></div>
<div style="position:absolute;left:14px;top:349px"><svg class="fi" width="12" height="16" viewBox="0 0 12 16"><path d="M0.5 0.5H8.5L11.5 3.5V15.5H0.5Z" fill="#fff" stroke="#737373"/><rect x="2.5" y="3" width="7.5" height="10" fill="#f6f6f6"/><path d="M8.5 0.5V3.5H11.5" fill="none" stroke="#737373"/><circle cx="4.9" cy="6.9" r="2.7" fill="#a9b2bb"/><circle cx="4.9" cy="6.9" r="1" fill="#f2f4f6"/><circle cx="7.5" cy="10.5" r="1.9" fill="#5f676f"/><circle cx="7.5" cy="10.5" r="0.7" fill="#fff"/></svg></div>
<div class="t mono d" style="left:58px;top:351px">api-ms-win-crt-stdio-l1-1-0.dll -&gt; C:\WI</div>
<div class="t mono d" style="left:358px;top:351px">AMD64</div>
<div class="t mono d" style="left:418px;top:351px">Dll; Executable</div>
<div class="t mono d" style="left:568px;top:351px">0x0014f460</div>
<div class="t mono d" style="left:668px;top:351px">0x180000000</div>
<div class="t mono d" style="left:768px;top:351px">0x0014b000</div>
<div class="t mono d" style="left:868px;top:351px">0x00063c10</div>
<div class="t mono d" style="left:968px;top:351px">0x00000003</div>
<div class="t mono d" style="left:1068px;top:351px">5.2</div>
<div class="t mono d" style="left:1212px;top:351px">0x00157963 (correct)</div>
<div class="row" style="left:0px;top:370px"></div>
<div style="position:absolute;left:14px;top:374px"><svg class="fi" width="12" height="16" viewBox="0 0 12 16"><path d="M0.5 0.5H8.5L11.5 3.5V15.5H0.5Z" fill="#fff" stroke="#737373"/><rect x="2.5" y="3" width="7.5" height="10" fill="#f6f6f6"/><path d="M8.5 0.5V3.5H11.5" fill="none" stroke="#737373"/><circle cx="4.9" cy="6.9" r="2.7" fill="#a9b2bb"/><circle cx="4.9" cy="6.9" r="1" fill="#f2f4f6"/><circle cx="7.5" cy="10.5" r="1.9" fill="#5f676f"/><circle cx="7.5" cy="10.5" r="0.7" fill="#fff"/></svg></div>
<div class="t mono d" style="left:58px;top:376px">api-ms-win-crt-string-l1-1-0.dll -&gt; C:\W</div>
<div class="t mono d" style="left:358px;top:376px">AMD64</div>
<div class="t mono d" style="left:418px;top:376px">Dll; Executable</div>
<div class="t mono d" style="left:568px;top:376px">0x0014f460</div>
<div class="t mono d" style="left:668px;top:376px">0x180000000</div>
<div class="t mono d" style="left:768px;top:376px">0x0014b000</div>
<div class="t mono d" style="left:868px;top:376px">0x00063c10</div>
<div class="t mono d" style="left:968px;top:376px">0x00000003</div>
<div class="t mono d" style="left:1068px;top:376px">5.2</div>
<div class="t mono d" style="left:1212px;top:376px">0x00157963 (correct)</div>
<div class="row" style="left:0px;top:395px"></div>
<div style="position:absolute;left:14px;top:399px"><svg class="fi" width="12" height="16" viewBox="0 0 12 16"><path d="M0.5 0.5H8.5L11.5 3.5V15.5H0.5Z" fill="#fff" stroke="#737373"/><rect x="2.5" y="3" width="7.5" height="10" fill="#f6f6f6"/><path d="M8.5 0.5V3.5H11.5" fill="none" stroke="#737373"/><circle cx="4.9" cy="6.9" r="2.7" fill="#a9b2bb"/><circle cx="4.9" cy="6.9" r="1" fill="#f2f4f6"/><circle cx="7.5" cy="10.5" r="1.9" fill="#5f676f"/><circle cx="7.5" cy="10.5" r="0.7" fill="#fff"/></svg></div>
<div class="t mono d" style="left:58px;top:401px">api-ms-win-crt-time-l1-1-0.dll -&gt; C:\WIN</div>
<div class="t mono d" style="left:358px;top:401px">AMD64</div>
<div class="t mono d" style="left:418px;top:401px">Dll; Executable</div>
<div class="t mono d" style="left:568px;top:401px">0x0014f460</div>
<div class="t mono d" style="left:668px;top:401px">0x180000000</div>
<div class="t mono d" style="left:768px;top:401px">0x0014b000</div>
<div class="t mono d" style="left:868px;top:401px">0x00063c10</div>
<div class="t mono d" style="left:968px;top:401px">0x00000003</div>
<div class="t mono d" style="left:1068px;top:401px">5.2</div>
<div class="t mono d" style="left:1212px;top:401px">0x00157963 (correct)</div>
<div class="row" style="left:0px;top:420px"></div>
<div style="position:absolute;left:14px;top:424px"><svg class="fi" width="12" height="16" viewBox="0 0 12 16"><path d="M0.5 0.5H8.5L11.5 3.5V15.5H0.5Z" fill="#fff" stroke="#737373"/><rect x="2.5" y="3" width="7.5" height="10" fill="#f6f6f6"/><path d="M8.5 0.5V3.5H11.5" fill="none" stroke="#737373"/><circle cx="4.9" cy="6.9" r="2.7" fill="#a9b2bb"/><circle cx="4.9" cy="6.9" r="1" fill="#f2f4f6"/><circle cx="7.5" cy="10.5" r="1.9" fill="#5f676f"/><circle cx="7.5" cy="10.5" r="0.7" fill="#fff"/></svg></div>
<div class="t mono d" style="left:58px;top:426px">api-ms-win-crt-utility-l1-1-0.dll -&gt; C:\</div>
<div class="t mono d" style="left:358px;top:426px">AMD64</div>
<div class="t mono d" style="left:418px;top:426px">Dll; Executable</div>
<div class="t mono d" style="left:568px;top:426px">0x0014f460</div>
<div class="t mono d" style="left:668px;top:426px">0x180000000</div>
<div class="t mono d" style="left:768px;top:426px">0x0014b000</div>
<div class="t mono d" style="left:868px;top:426px">0x00063c10</div>
<div class="t mono d" style="left:968px;top:426px">0x00000003</div>
<div class="t mono d" style="left:1068px;top:426px">5.2</div>
<div class="t mono d" style="left:1212px;top:426px">0x00157963 (correct)</div>
<div class="row" style="left:0px;top:445px"></div>
<div style="position:absolute;left:14px;top:449px"><svg class="fi" width="12" height="16" viewBox="0 0 12 16"><path d="M0.5 0.5H8.5L11.5 3.5V15.5H0.5Z" fill="#fff" stroke="#737373"/><rect x="2.5" y="3" width="7.5" height="10" fill="#f6f6f6"/><path d="M8.5 0.5V3.5H11.5" fill="none" stroke="#737373"/><circle cx="4.9" cy="6.9" r="2.7" fill="#a9b2bb"/><circle cx="4.9" cy="6.9" r="1" fill="#f2f4f6"/><circle cx="7.5" cy="10.5" r="1.9" fill="#5f676f"/><circle cx="7.5" cy="10.5" r="0.7" fill="#fff"/></svg></div>
<div class="t mono d" style="left:58px;top:451px">C:\WINDOWS\system32\OPENGL32.dll</div>
<div class="t mono d" style="left:358px;top:451px">AMD64</div>
<div class="t mono d" style="left:418px;top:451px">Dll; Executable</div>
<div class="t mono d" style="left:568px;top:451px">0x000f4000</div>
<div class="t mono d" style="left:668px;top:451px">0x180000000</div>
<div class="t mono d" style="left:768px;top:451px">0x00110000</div>
<div class="t mono d" style="left:868px;top:451px">0x0005bdf0</div>
<div class="t mono d" style="left:968px;top:451px">0x00000003</div>
<div class="t mono d" style="left:1068px;top:451px">10.0</div>
<div class="t mono d" style="left:1212px;top:451px">0x00100f26 (correct)</div>
<div class="row" style="left:0px;top:470px"></div>
<div style="position:absolute;left:14px;top:474px"><svg class="fi" width="12" height="16" viewBox="0 0 12 16"><path d="M0.5 0.5H8.5L11.5 3.5V15.5H0.5Z" fill="#fff" stroke="#737373"/><rect x="2.5" y="3" width="7.5" height="10" fill="#f6f6f6"/><path d="M8.5 0.5V3.5H11.5" fill="none" stroke="#737373"/><circle cx="4.9" cy="6.9" r="2.7" fill="#a9b2bb"/><circle cx="4.9" cy="6.9" r="1" fill="#f2f4f6"/><circle cx="7.5" cy="10.5" r="1.9" fill="#5f676f"/><circle cx="7.5" cy="10.5" r="0.7" fill="#fff"/></svg></div>
<div class="t mono d" style="left:58px;top:476px">F:\Projekti\Visual Studio code projekti\</div>
<div class="t mono d" style="left:358px;top:476px">AMD64</div>
<div class="t mono d" style="left:418px;top:476px">Dll; Executable</div>
<div class="t mono d" style="left:568px;top:476px">0x0000f8be</div>
<div class="t mono d" style="left:668px;top:476px">0x2e3650000</div>
<div class="t mono d" style="left:768px;top:476px">0x00015000</div>
<div class="t mono d" style="left:868px;top:476px">0x000011f0</div>
<div class="t mono d" style="left:968px;top:476px">0x00000003</div>
<div class="t mono d" style="left:1068px;top:476px">5.2</div>
<div class="t mono d" style="left:1212px;top:476px">0x00011839 (correct)</div>
<div class="row" style="left:0px;top:495px"></div>
<div style="position:absolute;left:14px;top:499px"><svg class="fi" width="12" height="16" viewBox="0 0 12 16"><path d="M0.5 0.5H8.5L11.5 3.5V15.5H0.5Z" fill="#fff" stroke="#737373"/><rect x="2.5" y="3" width="7.5" height="10" fill="#f6f6f6"/><path d="M8.5 0.5V3.5H11.5" fill="none" stroke="#737373"/><circle cx="4.9" cy="6.9" r="2.7" fill="#a9b2bb"/><circle cx="4.9" cy="6.9" r="1" fill="#f2f4f6"/><circle cx="7.5" cy="10.5" r="1.9" fill="#5f676f"/><circle cx="7.5" cy="10.5" r="0.7" fill="#fff"/></svg></div>
<div class="t mono d" style="left:58px;top:501px">C:\WINDOWS\system32\SHELL32.dll</div>
<div class="t mono d" style="left:358px;top:501px">AMD64</div>
<div class="t mono d" style="left:418px;top:501px">Dll; Executable</div>
<div class="t mono d" style="left:568px;top:501px">0x0075dcb0</div>
<div class="t mono d" style="left:668px;top:501px">0x180000000</div>
<div class="t mono d" style="left:768px;top:501px">0x00752000</div>
<div class="t mono d" style="left:868px;top:501px">0x001f47d0</div>
<div class="t mono d" style="left:968px;top:501px">0x00000002</div>
<div class="t mono d" style="left:1068px;top:501px">10.0</div>
<div class="t mono d" style="left:1212px;top:501px">0x007649cc (correct)</div>
</div>
<div class="a" style="left:706px;top:728px;width:338px;height:26px;border:1px solid #6e6e6e;background:#f0f1f6;box-shadow:inset 0 0 0 1px #fafafc"></div>
<div class="t" style="left:713px;top:735px;color:#575757">C:\WINDOWS\system32\ucrtbase.dll module loaded correctly</div>
<div class="t" style="left:3px;top:1015px;letter-spacing:-0.14px">Loading PE file "F:\Projekti\Visual Studio code projekti\SH_CRM\build\SH_CRM.exe" successful</div>
</body></html>
